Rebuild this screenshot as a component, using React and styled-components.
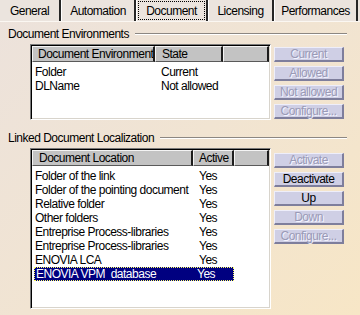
import React from "react";
import styled, { createGlobalStyle } from "styled-components";

const Global = createGlobalStyle`
  html, body {
    margin: 0;
    padding: 0;
  }
  body {
    font-family: "Liberation Sans", Arial, sans-serif;
    font-size: 12px;
    letter-spacing: -0.5px;
    color: #000;
  }
`;

const Window = styled.div`
  width: 360px;
  height: 315px;
  overflow: hidden;
  background: linear-gradient(135deg, #ece2dc 0%, #f1e4d2 50%, #f7e6c6 100%);
  display: flex;
  flex-direction: column;
`;

const TabBar = styled.div`
  display: flex;
  height: 21px;
  background: #ebe4de;
  border-bottom: 1px solid #fbf7f2;
`;

const Tab = styled.div`
  width: ${(p) => p.w}px;
  box-sizing: border-box;
  display: flex;
  align-items: center;
  justify-content: center;
  border-right: 2px solid #262626;
  border-left: 1px solid #fff;
  padding: 1px;
  &:first-child {
    border-left: none;
  }
`;

const TabLabel = styled.span`
  display: flex;
  align-items: center;
  justify-content: center;
  width: 100%;
  height: 100%;
  box-sizing: border-box;
  border: 1px dotted ${(p) => (p.focused ? "#000" : "transparent")};
`;

const Panel = styled.div`
  flex: 1;
  padding: 5px 13px 0 8px;
  display: flex;
  flex-direction: column;
`;

const SectionHead = styled.div`
  display: flex;
  align-items: center;
  gap: 6px;
  height: 14px;
  margin-top: ${(p) => p.top}px;
`;

const Groove = styled.div`
  flex: 1;
  height: 0;
  border-top: 1px solid #8c8782;
  border-bottom: 1px solid #fff;
`;

const Content = styled.div`
  display: flex;
  gap: 3px;
  margin-left: 22px;
  margin-top: ${(p) => p.top}px;
`;

const Table = styled.div`
  width: 241px;
  height: ${(p) => p.h}px;
  box-sizing: border-box;
  background: #fff;
  border-top: 1px solid #7a7a7a;
  border-left: 1px solid #7a7a7a;
  border-right: 1px solid #fff;
  border-bottom: 1px solid #fff;
  box-shadow: inset 1px 1px 0 #000, inset -1px -1px 0 #d8d4cc;
  padding: 1px 1px 0 1px;
  display: flex;
  flex-direction: column;
`;

const Body = styled.div`
  padding-top: 3px;
  display: flex;
  flex-direction: column;
`;

const Row = styled.div`
  display: grid;
  grid-template-columns: ${(p) => p.cols};
  height: ${(p) => (p.head ? 16 : 14)}px;
`;

const HeadCell = styled.div`
  background: #c3c3c3;
  box-sizing: border-box;
  border-top: 1px solid #f4f4f4;
  border-left: 1px solid #f4f4f4;
  border-right: 2px solid #1c1c1c;
  border-bottom: 1px solid #5a5a5a;
  padding-left: ${(p) => p.pad}px;
  line-height: 14px;
  white-space: nowrap;
  overflow: hidden;
`;

const Cell = styled.div`
  padding-left: ${(p) => p.pad}px;
  line-height: 14px;
  white-space: nowrap;
  overflow: hidden;
`;

const SelRow = styled.div`
  display: grid;
  grid-template-columns: ${(p) => p.cols};
  height: 14px;
  margin-left: 2px;
  width: 200px;
  box-sizing: border-box;
  background: #000080;
  color: #fff;
  border: 1px dotted #ffff66;
`;

const SelCell = styled.div`
  padding-left: ${(p) => p.pad}px;
  line-height: 12px;
  white-space: nowrap;
`;

const Buttons = styled.div`
  display: flex;
  flex-direction: column;
  gap: 4px;
  padding-top: ${(p) => p.top}px;
`;

const Button = styled.div`
  width: 70px;
  height: 15px;
  box-sizing: border-box;
  background: #cfcfe5;
  border-top: 1px solid #eeeefa;
  border-left: 1px solid #eeeefa;
  border-right: 2px solid #7e7e9c;
  border-bottom: 2px solid #7e7e9c;
  display: flex;
  align-items: center;
  justify-content: center;
  line-height: 12px;
  color: ${(p) => (p.disabled ? "#9a9ab6" : "#000")};
  text-shadow: ${(p) => (p.disabled ? "1px 1px 0 #f4f4ff" : "none")};
  white-space: nowrap;
`;

const tabs = [
  { label: "General", w: 61 },
  { label: "Automation", w: 75 },
  { label: "Document", w: 72, focused: true },
  { label: "Licensing", w: 66 },
  { label: "Performances", w: 84 },
];

const envCols = "123px 68px 1fr";
const envRows = [
  ["Folder", "Current"],
  ["DLName", "Not allowed"],
];

const locCols = "161px 41px 1fr";
const locRows = [
  ["Folder of the link", "Yes"],
  ["Folder of the pointing document", "Yes"],
  ["Relative folder", "Yes"],
  ["Other folders", "Yes"],
  ["Entreprise Process-libraries", "Yes"],
  ["Entreprise Process-libraries", "Yes"],
  ["ENOVIA LCA", "Yes"],
];

export default function App() {
  return (
    <Window>
      <Global />
      <TabBar>
        {tabs.map((t) => (
          <Tab key={t.label} w={t.w}>
            <TabLabel focused={t.focused}>{t.label}</TabLabel>
          </Tab>
        ))}
      </TabBar>
      <Panel>
        <SectionHead top={0}>
          <span>Document Environments</span>
          <Groove />
        </SectionHead>
        <Content top={3}>
          <Table h={76}>
            <Row head cols={envCols}>
              <HeadCell pad={5}>Document Environment</HeadCell>
              <HeadCell pad={6}>State</HeadCell>
              <HeadCell />
            </Row>
            <Body>
              {envRows.map((r) => (
                <Row key={r[0]} cols={envCols}>
                  <Cell pad={3}>{r[0]}</Cell>
                  <Cell pad={6}>{r[1]}</Cell>
                </Row>
              ))}
            </Body>
          </Table>
          <Buttons top={3}>
            <Button disabled>Current</Button>
            <Button disabled>Allowed</Button>
            <Button disabled>Not allowed</Button>
            <Button disabled>Configure...</Button>
          </Buttons>
        </Content>
        <SectionHead top={11}>
          <span>Linked Document Localization</span>
          <Groove />
        </SectionHead>
        <Content top={3}>
          <Table h={161}>
            <Row head cols={locCols}>
              <HeadCell pad={6}>Document Location</HeadCell>
              <HeadCell pad={5}>Active</HeadCell>
              <HeadCell />
            </Row>
            <Body>
              {locRows.map((r, i) => (
                <Row key={i} cols={locCols}>
                  <Cell pad={3}>{r[0]}</Cell>
                  <Cell pad={6}>{r[1]}</Cell>
                </Row>
              ))}
              <SelRow cols="158px 1fr">
                <SelCell pad={1}>ENOVIA VPM&nbsp; database</SelCell>
                <SelCell pad={4}>Yes</SelCell>
              </SelRow>
            </Body>
          </Table>
          <Buttons top={5}>
            <Button disabled>Activate</Button>
            <Button>Deactivate</Button>
            <Button>Up</Button>
            <Button disabled>Down</Button>
            <Button disabled>Configure...</Button>
          </Buttons>
        </Content>
      </Panel>
    </Window>
  );
}
